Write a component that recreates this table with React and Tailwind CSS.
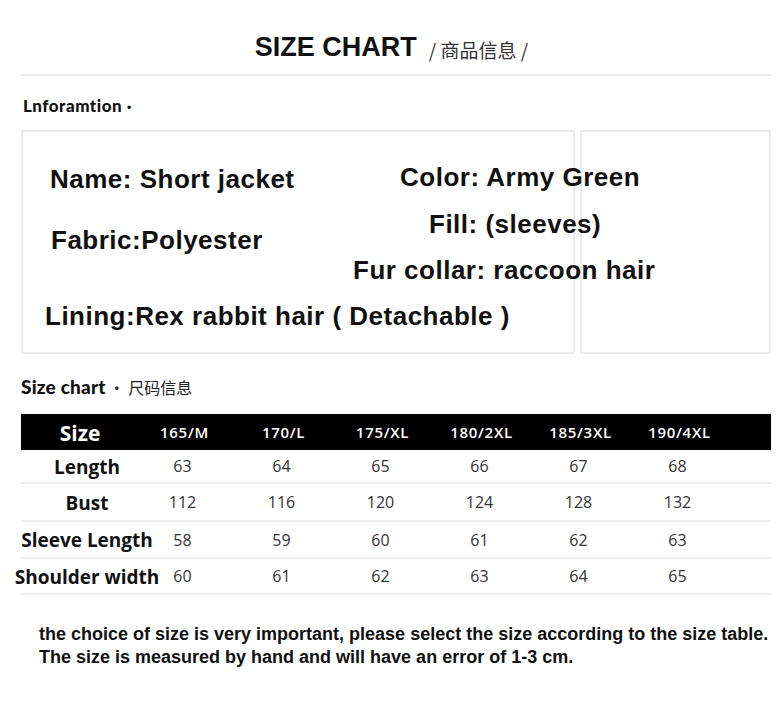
const sizes = ["165/M", "170/L", "175/XL", "180/2XL", "185/3XL", "190/4XL"];

const rows = [
  { label: "Length", values: [63, 64, 65, 66, 67, 68], h: "h-[34px]" },
  { label: "Bust", values: [112, 116, 120, 124, 128, 132], h: "h-[38px]" },
  { label: "Sleeve Length", values: [58, 59, 60, 61, 62, 63], h: "h-[37px]" },
  { label: "Shoulder width", values: [60, 61, 62, 63, 64, 65], h: "h-[36px]" },
];

const sans = "font-['Liberation_Sans','Noto_Sans_CJK_SC',sans-serif]";
const open = "font-['Open_Sans','Liberation_Sans',sans-serif]";
const geo = "font-['Lato','Liberation_Sans','Noto_Sans_CJK_SC',sans-serif]";

function InfoLine({ children, className = "" }) {
  return (
    <div className={`whitespace-nowrap text-[26px] font-bold leading-none tracking-[0.5px] text-[#111] ${sans} ${className}`}>
      {children}
    </div>
  );
}

export default function App() {
  return (
    <div className="min-h-screen w-[783px] bg-white pt-[34px] text-[#111]">
      {/* heading */}
      <div className="flex items-end justify-center gap-[12px]">
        <h1 className={`text-[27px] font-extrabold leading-none ${sans}`}>SIZE CHART</h1>
        <span className="pb-[2px] font-['Noto_Sans_CJK_SC',sans-serif] text-[19px] leading-none text-[#333]">
          / 商品信息 /
        </span>
      </div>
      <div className="ml-[21px] mt-[13px] h-[2px] w-[750px] bg-[#ededed]" />

      <div className={`ml-[23px] mt-[21px] text-[17px] font-black leading-none tracking-[0.5px] ${geo}`}>
        Lnforamtion ·
      </div>

      {/* product info */}
      <div className="ml-[21px] mt-[16px] grid h-[224px] w-[750px]">
        <div className="col-start-1 row-start-1 flex gap-[5px]">
          <div className="w-[554px] border-2 border-[#ececec]" />
          <div className="w-[191px] border-2 border-[#ececec]" />
        </div>
        <div className="col-start-1 row-start-1 flex">
          <div className="flex w-[334px] flex-col">
            <InfoLine className="ml-[29px] mt-[36px]">Name: Short jacket</InfoLine>
            <InfoLine className="ml-[30px] mt-[35px]">Fabric:Polyester</InfoLine>
            <InfoLine className="ml-[24px] mt-[50px]">Lining:Rex rabbit hair ( Detachable )</InfoLine>
          </div>
          <div className="flex flex-col">
            <InfoLine className="ml-[45px] mt-[34px]">Color: Army Green</InfoLine>
            <InfoLine className="ml-[74px] mt-[21px]">Fill: (sleeves)</InfoLine>
            <InfoLine className="-ml-[2px] mt-[20px]">Fur collar: raccoon hair</InfoLine>
          </div>
        </div>
      </div>

      <div className="ml-[21px] mt-[23px] flex items-center gap-[3px] leading-none">
        <span className={`text-[19px] font-black tracking-[0.2px] ${geo}`}>Size chart</span>
        <span className="font-['Noto_Sans_CJK_SC',sans-serif] text-[16px] text-[#222]">· 尺码信息</span>
      </div>

      {/* size table */}
      <div className="ml-[21px] mt-[18px] w-[750px]">
        <div className="grid h-[36px] grid-cols-[112px_repeat(6,99px)_1fr] items-center bg-black text-white">
          <div className={`flex justify-center pl-[6px] pt-[3px] text-[21px] font-bold ${open}`}>Size</div>
          {sizes.map((s) => (
            <div key={s} className={`flex justify-center pl-[4px] text-[15px] font-semibold tracking-[0.7px] ${open}`}>
              {s}
            </div>
          ))}
          <div />
        </div>
        {rows.map((r) => (
          <div
            key={r.label}
            className={`grid ${r.h} grid-cols-[112px_repeat(6,99px)_1fr] items-center border-b-2 border-[#eeeeee]`}
          >
            <div className={`flex justify-center whitespace-nowrap pl-[20px] pt-[2px] text-[19px] font-bold ${open}`}>
              {r.label}
            </div>
            {r.values.map((v, i) => (
              <div key={i} className={`flex justify-center text-[16px] text-[#333] ${open}`}>
                {v}
              </div>
            ))}
            <div />
          </div>
        ))}
      </div>

      <div className={`ml-[39px] mt-[28px] whitespace-nowrap text-[18px] font-bold leading-[23px] ${sans}`}>
        <p>the choice of size is very important, please select the size according to the size table.</p>
        <p>The size is measured by hand and will have an error of 1-3 cm.</p>
      </div>
    </div>
  );
}
